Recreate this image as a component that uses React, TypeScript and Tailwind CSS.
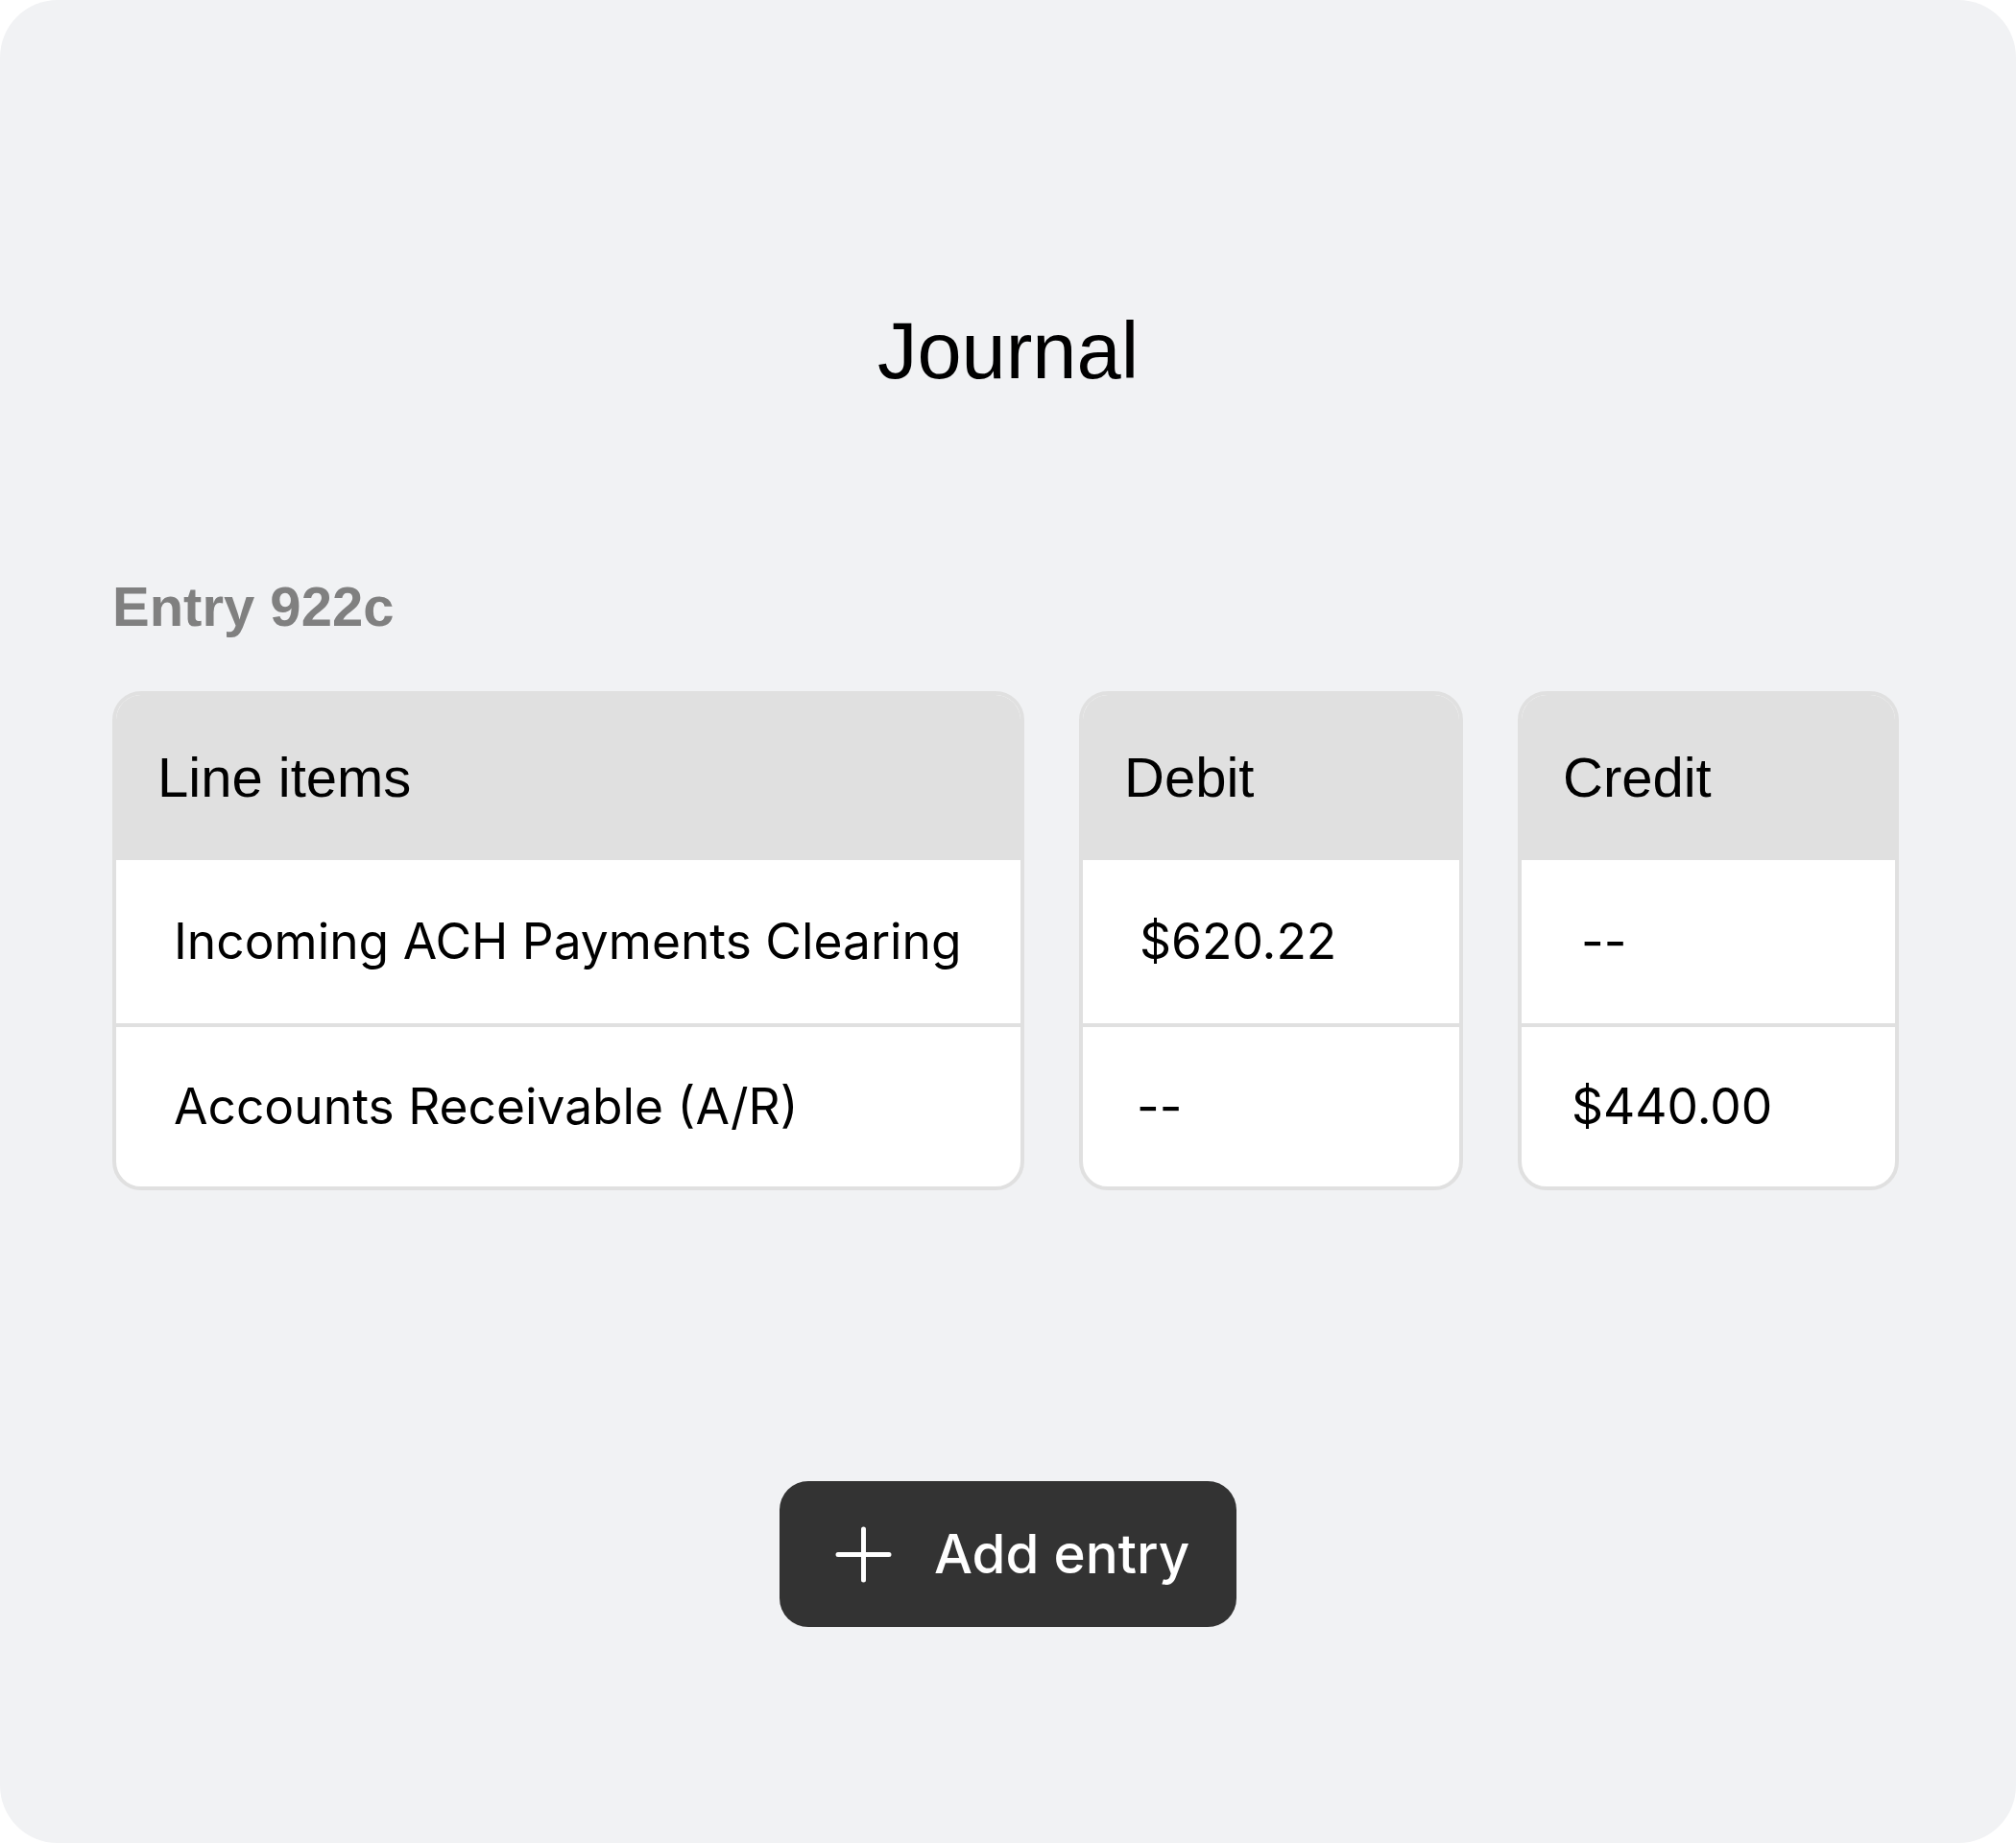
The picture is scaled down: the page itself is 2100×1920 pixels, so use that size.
import React from "react";

const arial = { fontFamily: '"Liberation Sans", Arial, sans-serif' };
const inter = { fontFamily: 'Inter, "Noto Sans", sans-serif' };

function Column({
  title,
  width,
  cells,
}: {
  title: string;
  width: string;
  cells: { text: string; pad: string }[];
}) {
  return (
    <div className={`${width} shrink-0 rounded-[30px] border-4 border-[#e0e0e0] bg-white overflow-hidden`}>
      <div className="h-[172px] bg-[#e0e0e0] flex items-center pl-[43px]">
        <span className="text-[58px] leading-none text-black" style={arial}>
          {title}
        </span>
      </div>
      {cells.map((c, i) => (
        <div
          key={i}
          className={`h-[170px] flex items-center ${c.pad} ${i > 0 ? "border-t-4 border-[#e0e0e0]" : ""}`}
        >
          <span className="text-[51.5px] leading-none text-black" style={inter}>
            {c.text}
          </span>
        </div>
      ))}
    </div>
  );
}

export default function App() {
  return (
    <div className="w-[2100px] h-[1920px] bg-white">
      <div className="w-full h-full rounded-[60px] bg-[#f1f2f4] flex flex-col">
        <h1
          className="mt-[324px] text-center text-[83px] leading-none text-black font-normal"
          style={arial}
        >
          Journal
        </h1>
        <div className="mt-[196px] px-[117px]">
          <div className="text-[58px] leading-none font-bold text-[#808080]" style={arial}>
            Entry 922c
          </div>
          <div className="mt-[59px] flex gap-[57px]">
            <Column
              title="Line items"
              width="w-[950px]"
              cells={[
                { text: "Incoming ACH Payments Clearing", pad: "pl-[60px]" },
                { text: "Accounts Receivable (A/R)", pad: "pl-[60px]" },
              ]}
            />
            <Column
              title="Debit"
              width="w-[400px]"
              cells={[
                { text: "$620.22", pad: "pl-[59px]" },
                { text: "--", pad: "pl-[56px]" },
              ]}
            />
            <Column
              title="Credit"
              width="w-[397px]"
              cells={[
                { text: "--", pad: "pl-[62px]" },
                { text: "$440.00", pad: "pl-[52px]" },
              ]}
            />
          </div>
        </div>
        <div className="mt-[303px] flex justify-center">
          <button className="h-[152px] w-[476px] rounded-[30px] bg-[#333333] flex items-center pl-[58px] gap-[44px]">
            <svg width="59" height="59" viewBox="0 0 59 59" fill="none">
              <path d="M29.5 3v53M3 29.5h53" stroke="white" strokeWidth="5" strokeLinecap="round" />
            </svg>
            <span className="text-[56.5px] leading-none font-medium text-white" style={inter}>
              Add entry
            </span>
          </button>
        </div>
      </div>
    </div>
  );
}
